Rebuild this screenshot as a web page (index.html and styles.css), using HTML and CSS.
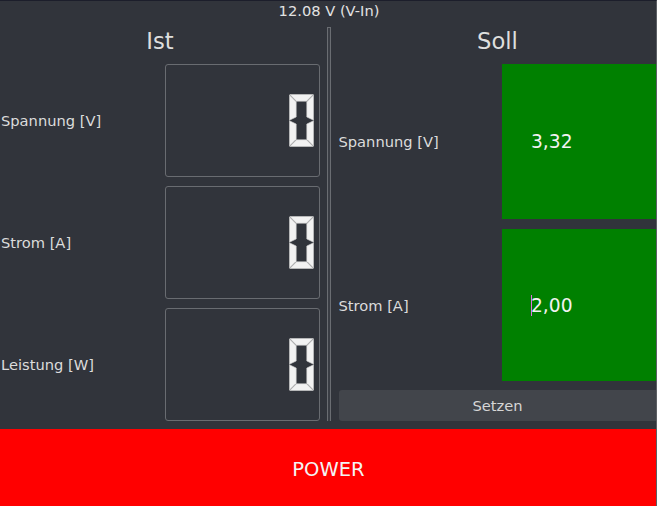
FILE: index.html
```html
<!DOCTYPE html>
<html>
<head>
<meta charset="utf-8">
<link rel="stylesheet" href="styles.css">
</head>
<body>
<div class="app">
  <div class="status">12.08 V (V-In)</div>
  <div class="main">
    <div class="col ist">
      <div class="heading heading-ist">Ist</div>
      <div class="rows">
        <div class="row">
          <div class="label">Spannung [V]</div>
          <div class="lcd">
            <svg class="digit" width="25" height="53" viewBox="0 0 25 53"><use href="#zero"/></svg>
          </div>
        </div>
        <div class="row">
          <div class="label">Strom [A]</div>
          <div class="lcd">
            <svg class="digit" width="25" height="53" viewBox="0 0 25 53"><use href="#zero"/></svg>
          </div>
        </div>
        <div class="row">
          <div class="label">Leistung [W]</div>
          <div class="lcd">
            <svg class="digit" width="25" height="53" viewBox="0 0 25 53"><use href="#zero"/></svg>
          </div>
        </div>
      </div>
    </div>
    <div class="sep"></div>
    <div class="col soll">
      <div class="heading heading-soll">Soll</div>
      <div class="set-row set-row-1">
        <div class="label label-soll">Spannung [V]</div>
        <div class="field"><span class="val">3,32</span></div>
      </div>
      <div class="set-row set-row-2">
        <div class="label label-soll">Strom [A]</div>
        <div class="field"><span class="cursor"></span><span class="val">2,00</span></div>
      </div>
      <div class="btn">Setzen</div>
    </div>
  </div>
  <div class="power">POWER</div>
</div>
<svg width="0" height="0" class="defs">
  <defs>
    <g id="zero">
      <polygon class="seg" points="0.8,0.5 24.2,0.5 17.5,7.2 7.5,7.2"/>
      <polygon class="seg" points="0.5,1 7.2,7.7 7.2,23 0.5,26.2"/>
      <polygon class="seg" points="24.5,1 17.8,7.7 17.8,23 24.5,26.2"/>
      <polygon class="seg" points="0.5,26.8 7.2,30 7.2,45.3 0.5,52"/>
      <polygon class="seg" points="24.5,26.8 17.8,30 17.8,45.3 24.5,52"/>
      <polygon class="seg" points="0.8,52.5 7.5,45.8 17.5,45.8 24.2,52.5"/>
      <line class="bevel" x1="0.8" y1="0.8" x2="7.3" y2="7.3"/>
      <line class="bevel" x1="24.2" y1="0.8" x2="17.7" y2="7.3"/>
      <line class="bevel" x1="0.8" y1="52.2" x2="7.3" y2="45.7"/>
      <line class="bevel" x1="24.2" y1="52.2" x2="17.7" y2="45.7"/>
    </g>
  </defs>
</svg>
</body>
</html>
```
FILE: styles.css
```css
html, body {
  margin: 0;
  padding: 0;
  background: #31343b;
}
body {
  font-family: "DejaVu Sans", sans-serif;
  font-size: 14.67px;
  color: #dcdcdc;
}
.defs {
  position: absolute;
  width: 0;
  height: 0;
}
.app {
  width: 656px;
  height: 505px;
  border-top: 1px solid #1c1e2b;
  border-right: 1px solid #5c5f64;
  display: flex;
  flex-direction: column;
  overflow: hidden;
}
.status {
  height: 26px;
  line-height: 20px;
  text-align: center;
  color: #e2e2e2;
  padding-left: 2px;
}
.main {
  display: flex;
  height: 394px;
}
.col {
  display: flex;
  flex-direction: column;
}
.ist {
  width: 327px;
}
.soll {
  flex: 1;
}
.heading {
  height: 37px;
  line-height: 28px;
  font-size: 22.67px;
  text-align: center;
  color: #dedede;
}
.heading-ist {
  padding-right: 7px;
}
.heading-soll {
  padding-left: 8px;
}
.rows {
  display: flex;
  flex-direction: column;
  gap: 9px;
}
.row {
  display: flex;
  align-items: center;
  height: 113px;
}
.label {
  width: 164px;
  padding-left: 1px;
  white-space: nowrap;
}
.lcd {
  border: 1px solid #696c71;
  border-radius: 3px;
  display: flex;
  align-items: center;
  justify-content: flex-end;
  padding-right: 5px;
  box-sizing: border-box;
  height: 113px;
  width: 155px;
}
.digit {
  display: block;
}
.seg {
  fill: #f2f2f2;
  stroke: #d0d0d0;
  stroke-width: 0.6;
}
.bevel {
  stroke: #b4b4b4;
  stroke-width: 0.8;
}
.sep {
  width: 2px;
  border: 1px solid #6a6d72;
  border-bottom: none;
  background: #3a3d44;
}
.set-row {
  display: flex;
  align-items: center;
}
.set-row-1 {
  height: 155px;
}
.set-row-2 {
  height: 152px;
  margin-top: 10px;
}
.label-soll {
  width: 163.5px;
  padding-left: 7.5px;
}
.field {
  flex: 1;
  height: 100%;
  background: #008000;
  display: flex;
  align-items: center;
  padding-left: 29px;
  font-size: 18.67px;
  color: #f2f2f2;
}
.cursor {
  width: 1px;
  height: 21px;
  background: #e070e0;
  margin-right: -1px;
}
.btn {
  margin-top: 9px;
  margin-left: 8px;
  height: 31px;
  line-height: 31px;
  background: #42454b;
  border-radius: 3px 0 0 3px;
  text-align: center;
  color: #d6d6d6;
}
.power {
  margin-top: 8px;
  flex: 1;
  background: #ff0000;
  color: #f4f4f4;
  font-size: 19.5px;
  display: flex;
  align-items: center;
  justify-content: center;
  padding-top: 4px;
  margin-right: -1px;
}
```
